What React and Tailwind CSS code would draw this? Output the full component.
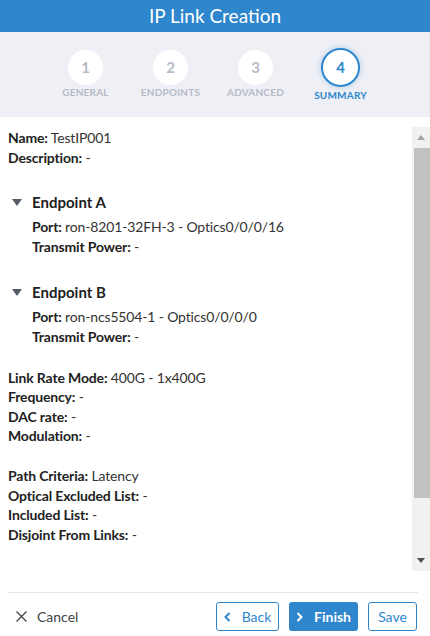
import React from "react";

const FONT = { fontFamily: "Lato, 'Noto Sans', sans-serif" };

function Step({ n, label, active }) {
  if (active) {
    return (
      <div className="w-[85px] flex flex-col items-center">
        <div className="mt-[16px] w-[39px] h-[39px] rounded-full bg-white border-2 border-[#2e86cd] flex items-center justify-center text-[#2e86cd] font-bold text-[15px] shadow-[0_0_6px_rgba(46,134,205,0.35)]">
          {n}
        </div>
        <div className="mt-[2px] text-[10px] leading-[12px] font-bold text-[#2e86cd] tracking-[0.2px]">{label}</div>
      </div>
    );
  }
  return (
    <div className="w-[85px] flex flex-col items-center">
      <div className="mt-[18px] w-[35px] h-[35px] rounded-full bg-white flex items-center justify-center text-[#b7bac6] font-bold text-[15px]">
        {n}
      </div>
      <div className="mt-[1px] text-[10px] leading-[12px] font-bold text-[#b7bac6] tracking-[0.2px]">{label}</div>
    </div>
  );
}

function Row({ label, value }) {
  return (
    <div className="leading-[19.6px] tracking-[-0.15px]">
      <span className="font-bold text-[#222]">{label}</span>{" "}
      <span className="text-[#333]">{value}</span>
    </div>
  );
}

function Endpoint({ title, port }) {
  return (
    <div>
      <div className="flex items-center h-[20px]">
        <span className="w-[24px] pl-[4px] flex items-center">
          <svg width="10" height="7" viewBox="0 0 10 7"><path d="M0 0 L10 0 L5 7 Z" fill="#555b66" /></svg>
        </span>
        <span className="font-bold text-[15px] text-[#222]">{title}</span>
      </div>
      <div className="pl-[24px] mt-[5px]">
        <Row label="Port:" value={port} />
        <Row label="Transmit Power:" value="-" />
      </div>
    </div>
  );
}

export default function App() {
  return (
    <div className="w-[430px] h-[636px] flex flex-col bg-white overflow-hidden" style={FONT}>
      <div className="h-8 bg-[#2e86cd] flex items-center justify-center text-white text-[19px]">
        IP Link Creation
      </div>
      <div className="h-[85px] bg-[#eff0f5] flex pl-[43px]">
        <Step n="1" label="GENERAL" />
        <Step n="2" label="ENDPOINTS" />
        <Step n="3" label="ADVANCED" />
        <Step n="4" label="SUMMARY" active />
      </div>
      <div className="flex-1 flex pt-[10px] pb-[21px]">
        <div className="flex-1 pl-2 pt-[1px] text-[14px]">
          <Row label="Name:" value="TestIP001" />
          <Row label="Description:" value="-" />
          <div className="h-[25px]" />
          <Endpoint title="Endpoint A" port="ron-8201-32FH-3 - Optics0/0/0/16" />
          <div className="h-[26px]" />
          <Endpoint title="Endpoint B" port="ron-ncs5504-1 - Optics0/0/0/0" />
          <div className="h-[21px]" />
          <Row label="Link Rate Mode:" value="400G - 1x400G" />
          <Row label="Frequency:" value="-" />
          <Row label="DAC rate:" value="-" />
          <Row label="Modulation:" value="-" />
          <div className="h-[20px]" />
          <Row label="Path Criteria:" value="Latency" />
          <Row label="Optical Excluded List:" value="-" />
          <Row label="Included List:" value="-" />
          <Row label="Disjoint From Links:" value="-" />
        </div>
        <div className="w-[18px] bg-[#f1f1f1] flex flex-col">
          <div className="h-[21px] flex items-center justify-center">
            <svg width="8" height="5" viewBox="0 0 8 5"><path d="M0 5 L4 0 L8 5 Z" fill="#a3a3a3" /></svg>
          </div>
          <div className="h-[350px] ml-[2px] bg-[#c1c1c1]" />
          <div className="flex-1 flex items-end justify-center pb-[8px]">
            <svg width="8" height="5" viewBox="0 0 8 5"><path d="M0 0 L8 0 L4 5 Z" fill="#505050" /></svg>
          </div>
        </div>
      </div>
      <div className="mx-2 mr-3 border-t border-[#e6e6e6]" />
      <div className="h-[43px] flex items-end pb-[5px] pl-4 pr-[13px]">
        <div className="h-[29px] flex items-center text-[#444] text-[14px]">
          <svg width="11" height="11" viewBox="0 0 11 11" className="mr-[10px]">
            <path d="M0.5 0.5 L10.5 10.5 M10.5 0.5 L0.5 10.5" stroke="#444" strokeWidth="1.3" />
          </svg>
          Cancel
        </div>
        <div className="flex-1" />
        <button className="h-[29px] w-[63px] rounded-[3px] border border-[#2e86cd] text-[#2e86cd] text-[14px] flex items-center justify-center bg-white">
          <svg width="7" height="10" viewBox="0 0 7 10" className="mr-[11px]">
            <path d="M5.5 1 L1.5 5 L5.5 9" fill="none" stroke="#2e86cd" strokeWidth="2" />
          </svg>
          Back
        </button>
        <button className="ml-[10px] h-[29px] w-[69px] rounded-[3px] bg-[#2e86cd] text-white font-bold text-[14px] flex items-center justify-center">
          <svg width="7" height="10" viewBox="0 0 7 10" className="mr-[11px]">
            <path d="M1.5 1 L5.5 5 L1.5 9" fill="none" stroke="#fff" strokeWidth="2" />
          </svg>
          Finish
        </button>
        <button className="ml-[10px] h-[29px] w-[49px] rounded-[3px] border border-[#2e86cd] text-[#2e86cd] text-[14px] flex items-center justify-center bg-white">
          Save
        </button>
      </div>
    </div>
  );
}
